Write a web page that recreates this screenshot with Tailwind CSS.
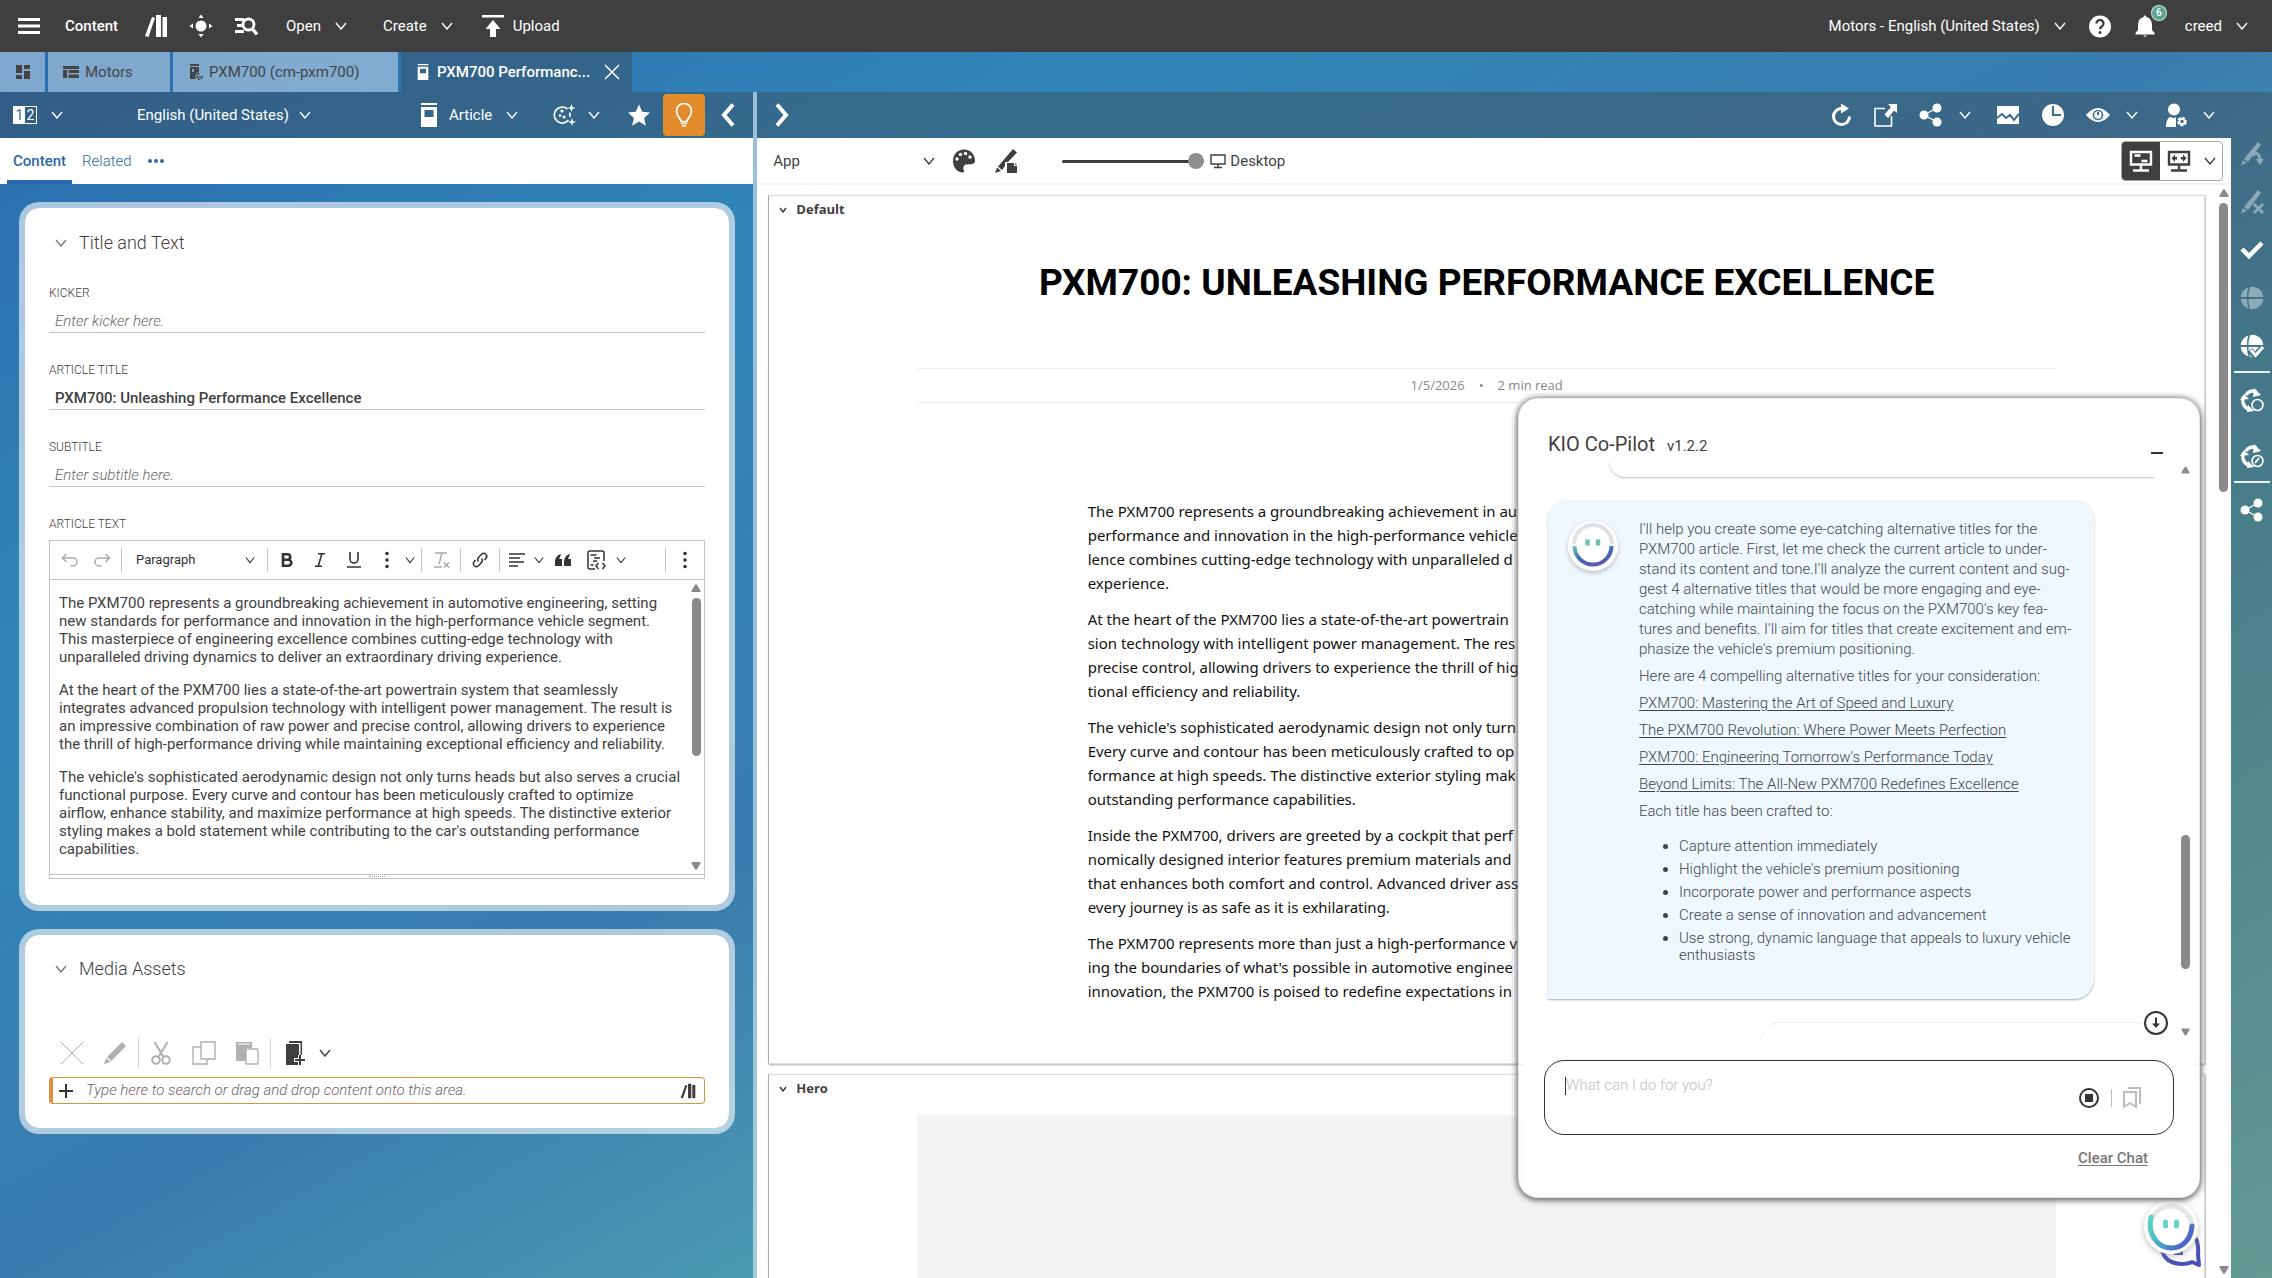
<!DOCTYPE html>
<html lang="en">
  <head>
    <meta charset="UTF-8" />
    <meta name="viewport" content="width=device-width, initial-scale=1.0" />
    <title>PXM700 Performance - Content</title>
    <script src="https://cdn.jsdelivr.net/npm/@tailwindcss/browser@4"></script>
  </head>
  <body
    class="h-screen overflow-hidden flex flex-col font-['Roboto',sans-serif] text-[15px] text-[#3f3f3f] bg-[linear-gradient(to_bottom_right,#2a6aae_0%,#3186b7_27%,#397caf_50%,#4b9bb2_67%,#58acb4_78%,#76cbc2_100%)]"
  >
    <!-- Icon sprite -->
    <svg class="hidden">
      <symbol id="chev" viewBox="0 0 12 8"><path d="M1 1l5 6 5-6" fill="none" stroke="currentColor" stroke-width="1.4" /></symbol>
      <symbol id="books" viewBox="0 0 24 24"><path d="M8 3l3 .8L4.500 23l-3.500-1zM12 1h5v22h-5zM18.500 3H23v20h-4.500z" fill="currentColor" /></symbol>
      <symbol id="article" viewBox="0 0 24 24"><path d="M4 0h16v2H4zM4 4h16v20H4zM7.500 7v7h9V7z" fill="currentColor" fill-rule="evenodd" /></symbol>
      <symbol id="share" viewBox="0 0 24 24"><g fill="currentColor"><circle cx="5" cy="12" r="4.500" /><circle cx="18" cy="5" r="4.500" /><circle cx="18" cy="19" r="4.500" /></g><path d="M18 5L5 12l13 7" fill="none" stroke="currentColor" stroke-width="1.300" /></symbol>
      <symbol id="pencil" viewBox="0 0 24 24"><path d="M19 1l4 4L8.500 20 4 16zM3 17l4.500 4L1 23z" fill="currentColor" /></symbol>
      <symbol id="globe" viewBox="0 0 24 24"><path d="M8.500 1.500C4 3 1 7 .7 11H7c0-4 .5-7 1.500-9.500zM10.500 1C9 4 8.500 7.500 8.500 11h14.800C22.800 5 18 .8 12 .8zM.7 13c.5 4.500 3.500 8 7.800 9.500C7.500 19.500 7 16.500 7 13zM8.500 13c0 4 .7 7.500 2 10.200C17 23.800 22.800 19 23.300 13z" fill="currentColor" /></symbol>
      <symbol id="cycle" viewBox="0 0 24 24">
        <path d="M6 7a8 8 0 0 1 10-3.500M3.500 9a9 9 0 0 0 5 12" fill="none" stroke="currentColor" stroke-width="3.500" />
        <path d="M14 0l7 7-8 2zM0 12l4-6 5 5zM8 17l6 6-7 1z" fill="currentColor" />
        <circle cx="17.500" cy="17" r="5.500" fill="none" stroke="currentColor" stroke-width="1.600" />
      </symbol>
      <symbol id="up" viewBox="0 0 10 8"><path d="M4 .8Q5-.5 6 .8L9.500 6.500Q10 8 8.500 8h-7Q0 8 .5 6.500z" fill="#8a8a8a" /></symbol>
      <symbol id="dots" viewBox="0 0 4 18"><g fill="currentColor"><circle cx="2" cy="2.500" r="1.800" /><circle cx="2" cy="9" r="1.800" /><circle cx="2" cy="15.500" r="1.800" /></g></symbol>
    </svg>

    <!-- Top bar -->
    <header class="h-[52px] shrink-0 flex items-center bg-[#3f3f3f] text-white pl-[17px] pr-6">
      <button aria-label="Menu"><svg class="size-6" viewBox="0 0 24 24" fill="currentColor"><path d="M1 4h22v3H1zM1 10.500h22v3H1zM1 17h22v3H1z" /></svg></button>
      <span class="ml-6 font-medium w-[55px]">Content</span>
      <button class="ml-6" aria-label="Library"><svg class="size-6"><use href="#books" /></svg></button>
      <button class="ml-[21px]" aria-label="Control room"><svg class="size-6" viewBox="0 0 24 24" fill="currentColor"><circle cx="12" cy="12" r="5.500" /><path d="M12 .5L14.500 4h-5zM12 23.500L9.500 20h5zM.5 12L4 9.500v5zM23.500 12L20 14.500v-5z" /></svg></button>
      <button class="ml-[21px]" aria-label="Search"><svg class="size-6" viewBox="0 0 24 24" fill="none" stroke="currentColor" stroke-width="2.800"><path d="M1 5.500h9M3 11.500h6M1 17.500h9" /><circle cx="14.500" cy="10.500" r="5.500" /><path d="M18 14.500l5 6" stroke-width="3.400" /></svg></button>
      <button class="ml-[28px] flex items-center gap-[14px]">Open<svg class="w-3 h-2"><use href="#chev" /></svg></button>
      <button class="ml-9 flex items-center gap-[14px]">Create<svg class="w-3 h-2"><use href="#chev" /></svg></button>
      <button class="ml-7 flex items-center gap-2"><svg class="size-6" viewBox="0 0 24 24" fill="currentColor"><path d="M1 1h22v2.500H1zM12 6l7.500 9H15v8H9v-8H4.500z" /></svg>Upload</button>
      <button class="ml-auto flex items-center gap-[14px]">Motors - English (United States)<svg class="w-3 h-2"><use href="#chev" /></svg></button>
      <button class="ml-[22px]" aria-label="Help"><svg class="size-6" viewBox="0 0 24 24"><circle cx="12" cy="12.500" r="11" fill="#fff" /><path d="M8.500 9.500a3.500 3.500 0 1 1 5.500 2.800c-1.500 1-2 1.500-2 3" fill="none" stroke="#3f3f3f" stroke-width="2.400" /><circle cx="12" cy="18.500" r="1.500" fill="#3f3f3f" /></svg></button>
      <button class="ml-[21px] relative" aria-label="Notifications"><svg class="size-6" viewBox="0 0 24 24" fill="currentColor"><path d="M12 1l1.500 2c4 1 5.500 4.500 5.500 8v5l2.500 3v1.500h-19V19L5 16v-5c0-3.500 1.500-7 5.500-8zM10 21.500h4l-2 1.500z" /></svg><span class="absolute -top-[9px] -right-[10px] size-4 rounded-full bg-[#5ba594] border border-white/70 text-[10px] leading-[14px] font-medium">6</span></button>
      <button class="ml-[28px] flex items-center gap-[14px]">creed<svg class="w-3 h-2"><use href="#chev" /></svg></button>
    </header>

    <!-- Work area tabs -->
    <nav class="h-10 shrink-0 flex gap-[3px] text-[#444]">
      <button class="w-[45px] bg-white/40 flex items-center justify-center" aria-label="Dashboard"><svg class="size-4" viewBox="0 0 16 16" fill="currentColor"><path d="M1 1h6v8H1zM1 11h6v4H1zM9 1h6v4H9zM9 7h6v8H9z" /></svg></button>
      <button class="w-[122px] bg-white/40 flex items-center gap-[6px] pl-[15px]"><svg class="w-4 h-[14px]" viewBox="0 0 16 12" fill="currentColor"><path d="M0 0h16v3H0zM0 4h4v8H0zM5.500 4H16v3H5.500zM5.500 8.500H16V12H5.500z" /></svg>Motors</button>
      <button class="w-[225px] bg-white/40 flex items-center gap-[6px] pl-[16px]"><svg class="w-[14px] h-4" viewBox="0 0 14 16" fill="currentColor"><path d="M1 0h9v2H1zM1 3h9v5l-3 2v5H1zM3 5v3h2V5zM9 9h1.500v7H9zM6 12h8v1.500H6zM7 9.500l1-1 5.500 6-1 1z" fill-rule="evenodd" /></svg>PXM700 (cm-pxm700)</button>
      <div class="w-[231px] bg-[#3f3f3f]/35 flex items-center text-white pl-[14px]">
        <svg class="size-4"><use href="#article" /></svg>
        <button class="ml-[6px] font-medium">PXM700 Performanc...</button>
        <button class="ml-auto mr-3" aria-label="Close tab"><svg class="size-4" viewBox="0 0 16 16" fill="none" stroke="currentColor" stroke-width="1.500"><path d="M1 1l14 14M15 1L1 15" /></svg></button>
      </div>
    </nav>

    <div class="flex-1 min-h-0 flex">
      <!-- Form side -->
      <section class="w-1/3 shrink-0 border-r-4 border-white/50 flex flex-col">
        <div class="h-[46px] bg-[#3f3f3f]/35 text-white flex items-center pl-[13px] pr-[13px]">
          <button class="flex items-center gap-[14px]" aria-label="Compare"><span class="h-[18px] w-6 border border-white flex text-sm leading-4"><span class="w-1/2 bg-white text-[#36688f]">1</span><span class="w-1/2">2</span></span><svg class="w-3 h-2"><use href="#chev" /></svg></button>
          <select class="ml-[74px] appearance-none" aria-label="Language"><option>English (United States)</option></select>
          <svg class="w-3 h-2 ml-[10px]"><use href="#chev" /></svg>
          <button class="ml-auto flex items-center"><svg class="size-6 mr-2"><use href="#article" /></svg>Article<svg class="w-3 h-2 ml-[14px]"><use href="#chev" /></svg></button>
          <button class="ml-[34px] flex items-center gap-3" aria-label="Versions"><svg class="size-6" viewBox="0 0 24 24" fill="none" stroke="currentColor" stroke-width="1.700"><path d="M15.500 6A8 8 0 1 0 16.500 17M17.500 9.500q1 2.500 .3 4.500" /><g fill="currentColor" stroke="none"><circle cx="10" cy="8" r="1.600" /><circle cx="8" cy="12.500" r="1.300" /><circle cx="12" cy="14" r="1.600" /><path d="M19.500 1l1 3 3 1-3 1-1 3-1-3-3-1 3-1zM20 15l1 3 3 1-3 1-1 3-1-3-3-1 3-1z" /></g></svg><svg class="w-3 h-2"><use href="#chev" /></svg></button>
          <button class="ml-[27px]" aria-label="Bookmark"><svg class="size-6" viewBox="0 0 24 24" fill="currentColor"><path d="M12 1.500l3.200 7.300 7.800.8-5.900 5.300 1.800 7.900L12 18.600l-6.900 4.200 1.800-7.900L1 9.600l7.800-.8z" /></svg></button>
          <button class="ml-3 w-[42px] h-[42px] rounded bg-[#e28c2b] flex items-center justify-center" aria-label="Suggestions"><svg class="size-6" viewBox="0 0 24 24" fill="none" stroke="currentColor" stroke-width="1.700"><path d="M9 18.500c0-3-4.500-5-4.500-10.500a7.500 7.500 0 0 1 15 0c0 5.500-4.500 7.500-4.500 10.500zM9 20.500h6M10 23h4" /></svg></button>
          <button class="ml-[11px]" aria-label="Collapse"><svg class="size-6" viewBox="0 0 24 24" fill="none" stroke="currentColor" stroke-width="4"><path d="M17 1.500L8 12l9 10.500" /></svg></button>
        </div>

        <div class="h-[46px] bg-white flex items-center pl-[7px] text-[#2b67a5]">
          <a href="#content" class="h-full px-[6px] flex items-center border-b-4 border-[#2a68ae] pt-1 font-medium">Content</a>
          <a href="#related" class="ml-[10px] font-light">Related</a>
          <button class="ml-4" aria-label="More tabs"><svg class="w-4 h-1" viewBox="0 0 16 4" fill="currentColor"><circle cx="2" cy="2" r="2" /><circle cx="8" cy="2" r="2" /><circle cx="14" cy="2" r="2" /></svg></button>
        </div>

        <div class="pl-[19px] pr-[18px] pt-[18px] flex flex-col gap-[18px]">
          <div class="border-[6px] border-white/60 bg-white bg-clip-padding rounded-[20px] px-6 pt-[21px] pb-[26px]">
            <h2 class="pl-[6px] h-7 flex items-center gap-3 text-lg font-light"><svg class="w-3 h-2 opacity-70"><use href="#chev" /></svg>Title and Text</h2>
            <div class="mt-7 flex flex-col gap-[29px]">
              <div class="flex flex-col">
                <label for="kicker" class="text-xs leading-4 font-light">KICKER</label>
                <input id="kicker" class="mt-2 h-6 px-[6px] border-b border-[#c4c4c4] outline-none placeholder:italic placeholder:font-light placeholder:text-[#666]" placeholder="Enter kicker here." />
              </div>
              <div class="flex flex-col">
                <label for="title" class="text-xs leading-4 font-light">ARTICLE TITLE</label>
                <input id="title" class="mt-2 h-6 px-[6px] border-b border-[#c4c4c4] outline-none font-medium" value="PXM700: Unleashing Performance Excellence" />
              </div>
              <div class="flex flex-col">
                <label for="subtitle" class="text-xs leading-4 font-light">SUBTITLE</label>
                <input id="subtitle" class="mt-2 h-6 px-[6px] border-b border-[#c4c4c4] outline-none placeholder:italic placeholder:font-light placeholder:text-[#666]" placeholder="Enter subtitle here." />
              </div>
              <div>
                <div id="text-label" class="text-xs leading-4 font-light">ARTICLE TEXT</div>
                <div class="mt-2 border border-[#c4c4c4]">
                  <div class="h-[39px] border-b border-[#c4c4c4] pl-1 flex items-center text-[#333] [&>button]:flex [&>button]:items-center [&>button]:justify-center">
                    <button class="w-8 text-[#aaa]" aria-label="Undo"><svg class="size-[18px]" viewBox="0 0 18 18" fill="none" stroke="currentColor" stroke-width="1.500"><path d="M5.500 3L1.500 7l4 4M1.500 7H12a4 4 0 0 1 0 8H9.500" /></svg></button>
                    <button class="w-8 text-[#aaa]" aria-label="Redo"><svg class="size-[18px]" viewBox="0 0 18 18" fill="none" stroke="currentColor" stroke-width="1.500"><path d="M12.500 3l4 4-4 4M16.500 7H6a4 4 0 0 0 0 8h2.500" /></svg></button>
                    <span class="ml-[3px] w-px h-6 bg-[#c4c4c4]"></span>
                    <select class="ml-[14px] w-[108px] appearance-none text-[13px]" aria-label="Heading"><option>Paragraph</option></select>
                    <svg class="ml-px w-[10px] h-2"><use href="#chev" /></svg>
                    <span class="ml-3 mr-[3px] w-px h-6 bg-[#c4c4c4]"></span>
                    <button class="w-8" aria-label="Bold"><svg class="size-4" viewBox="0 0 16 16" fill="none" stroke="currentColor" stroke-width="2.600"><path d="M4 2.300h4.500a2.700 2.700 0 0 1 0 5.400H4zM4 7.700h5.300a3 3 0 0 1 0 6H4zM4 1v14" /></svg></button>
                    <button class="w-[34px]" aria-label="Italic"><svg class="size-4" viewBox="0 0 16 16" fill="none" stroke="currentColor" stroke-width="1.600"><path d="M6 1.800h7M3 14.200h7M9.800 2L6.300 14" /></svg></button>
                    <button class="w-[34px]" aria-label="Underline"><svg class="size-4" viewBox="0 0 16 16" fill="none" stroke="currentColor" stroke-width="1.600"><path d="M4 0v7a4 4 0 0 0 8 0V0M1 15h14" /></svg></button>
                    <button class="ml-1 w-6" aria-label="More styles"><svg class="w-1 h-[18px]"><use href="#dots" /></svg></button>
                    <svg class="ml-[6px] w-[10px] h-2"><use href="#chev" /></svg>
                    <span class="ml-[6px] w-px h-6 bg-[#c4c4c4]"></span>
                    <button class="w-[38px] text-[#aaa]" aria-label="Remove format"><svg class="size-[18px]" viewBox="0 0 18 18" fill="none" stroke="currentColor" stroke-width="1.500"><path d="M3 2h12M10 2L7 13M2 16h8M12 11.500l5 5M17 11.500l-5 5" /></svg></button>
                    <span class="w-px h-6 bg-[#c4c4c4]"></span>
                    <button class="w-[38px]" aria-label="Link"><svg class="size-4" viewBox="0 0 16 16" fill="none" stroke="currentColor" stroke-width="1.500"><path d="M6.500 9.500a3 3 0 0 1 0-4l3-3.200a3 3 0 0 1 4.300 4.200L12.500 8M9.500 6.500a3 3 0 0 1 0 4l-3 3.200a3 3 0 0 1-4.300-4.200L3.500 8" /></svg></button>
                    <span class="w-px h-6 bg-[#c4c4c4]"></span>
                    <button class="w-[34px]" aria-label="Align"><svg class="size-4" viewBox="0 0 16 16" fill="none" stroke="currentColor" stroke-width="1.400"><path d="M0 2h16M0 6h11M0 10h15M0 14h9" /></svg></button>
                    <svg class="w-[10px] h-2"><use href="#chev" /></svg>
                    <button class="ml-[2px] w-[34px]" aria-label="Quote"><svg class="w-4 h-3" viewBox="0 0 16 12" fill="currentColor"><path d="M0 8c0-4 2-7 6-8L5 3 4 5h3v7H0zM9 8c0-4 2-7 6-8l-1 3-1 2h3v7H9z" /></svg></button>
                    <button class="w-8" aria-label="Source"><svg class="size-5" viewBox="0 0 20 20" fill="none" stroke="currentColor" stroke-width="1.500"><path d="M9 19H4q-2 0-2-2V3q0-2 2-2h12q2 0 2 2v8M4.500 5h6M8 8h6M7 11h4M4.500 15h3M12.500 13l-2.500 3 2.500 3M16.500 13l2.500 3-2.500 3" /></svg></button>
                    <svg class="ml-1 w-[10px] h-2"><use href="#chev" /></svg>
                    <span class="ml-auto w-px h-6 bg-[#c4c4c4]"></span>
                    <button class="w-[38px]" aria-label="More"><svg class="w-1 h-[18px]"><use href="#dots" /></svg></button>
                  </div>
                  <div class="flex h-[294px]">
                    <div contenteditable="true" role="textbox" aria-labelledby="text-label" class="flex-1 min-w-0 pl-[9px] pr-2 pt-[14px] overflow-hidden outline-none flex flex-col gap-[15px] leading-[18px]">
                      <p>The PXM700 represents a groundbreaking achievement in automotive engineering, setting new standards for performance and innovation in the high-performance vehicle segment. This masterpiece of engineering excellence combines cutting-edge technology with unparalleled driving dynamics to deliver an extraordinary driving experience.</p>
                      <p>At the heart of the PXM700 lies a state-of-the-art powertrain system that seamlessly integrates advanced propulsion technology with intelligent power management. The result is an impressive combination of raw power and precise control, allowing drivers to experience the thrill of high-performance driving while maintaining exceptional efficiency and reliability.</p>
                      <p>The vehicle's sophisticated aerodynamic design not only turns heads but also serves a crucial functional purpose. Every curve and contour has been meticulously crafted to optimize airflow, enhance stability, and maximize performance at high speeds. The distinctive exterior styling makes a bold statement while contributing to the car's outstanding performance capabilities.</p>
                    </div>
                    <div class="w-4 py-1 flex flex-col items-center">
                      <svg class="w-[10px] h-2"><use href="#up" /></svg>
                      <span class="mt-[6px] w-[9px] h-[158px] rounded-full bg-[#8a8a8a]"></span>
                      <svg class="mt-auto w-[10px] h-2 rotate-180"><use href="#up" /></svg>
                    </div>
                  </div>
                  <div class="h-1 border-t border-[#c4c4c4] flex justify-center"><span class="w-4 h-[3px] -mt-px bg-white border-y border-dotted border-[#aaa]"></span></div>
                </div>
              </div>
            </div>
          </div>

          <div class="border-[6px] border-white/60 bg-white bg-clip-padding rounded-[20px] px-6 pt-5 pb-6">
            <h2 class="pl-[6px] h-7 flex items-center gap-3 text-lg font-light"><svg class="w-3 h-2 opacity-70"><use href="#chev" /></svg>Media Assets</h2>
            <div class="mt-[55px] h-[30px] pl-[11px] flex items-center text-[#b0b0b0]">
              <button aria-label="Remove"><svg class="size-6" viewBox="0 0 24 24" fill="none" stroke="currentColor"><path d="M1 1l22 22M23 1L1 23" /></svg></button>
              <button class="ml-[19px]" aria-label="Edit"><svg class="size-6"><use href="#pencil" /></svg></button>
              <span class="ml-[11px] w-px h-[30px] bg-[#d5d5d5]"></span>
              <button class="ml-[10px]" aria-label="Cut"><svg class="size-6" viewBox="0 0 24 24" fill="none" stroke="currentColor" stroke-width="2"><path d="M5.500 1l9 15M18.500 1l-9 15" /><circle cx="7" cy="19" r="3.800" /><circle cx="17" cy="19" r="3.800" /></svg></button>
              <button class="ml-[19px]" aria-label="Copy"><svg class="size-6" viewBox="0 0 24 24" fill="none" stroke="currentColor" stroke-width="1.400"><path d="M15 18H9V1h14v17h-8zM9 6H1v17h14v-5" /></svg></button>
              <button class="ml-[19px]" aria-label="Paste"><svg class="size-6" viewBox="0 0 24 24"><path d="M1 2q0-1 1-1h14q1 0 1 1v5h-6v13H2q-1 0-1-1z" fill="currentColor" /><path d="M3 3h12" stroke="#fff" /><rect x="11" y="8" width="12" height="15" rx="1" fill="#fff" stroke="currentColor" stroke-width="1.400" /></svg></button>
              <span class="ml-[11px] w-px h-[30px] bg-[#d5d5d5]"></span>
              <button class="ml-3 text-[#3f3f3f]" aria-label="Add content"><svg class="size-6" viewBox="0 0 24 24" fill="currentColor"><path d="M6 0h13v14h-1.500V2H6zM3 3h13v11h-1v3h-4v4h4v3H3zM16 14h2v4h4v2h-4v4h-2v-4h-4v-2h4z" /></svg></button>
              <svg class="ml-3 w-3 h-2 text-[#3f3f3f]"><use href="#chev" /></svg>
            </div>
            <div class="mt-[9px] h-[27px] border border-l-4 border-[#d9913a] rounded flex items-center pl-[6px] pr-2">
              <svg class="size-[14px]" viewBox="0 0 14 14"><path d="M7 0v14M0 7h14" stroke="#333" stroke-width="2" /></svg>
              <input class="ml-[13px] flex-1 outline-none placeholder:italic placeholder:font-light placeholder:text-[#666]" aria-label="Add media" placeholder="Type here to search or drag and drop content onto this area." />
              <button aria-label="Open library"><svg class="size-4"><use href="#books" /></svg></button>
            </div>
          </div>
        </div>
      </section>

      <!-- Preview side -->
      <section class="flex-1 min-w-0 flex flex-col">
        <div class="h-[46px] shrink-0 bg-[#3f3f3f]/35 text-white flex items-center pl-3 pr-[57px]">
          <button aria-label="Expand"><svg class="size-6" viewBox="0 0 24 24" fill="none" stroke="currentColor" stroke-width="4"><path d="M8 1.500L17 12 8 22.500" /></svg></button>
          <button class="ml-auto" aria-label="Reload"><svg class="size-6" viewBox="0 0 24 24" fill="none" stroke="currentColor" stroke-width="3"><path d="M13 5.500a8 8 0 1 0 7.500 8" /><path d="M12 .5l8 5-8 5z" fill="currentColor" stroke="none" /></svg></button>
          <button class="ml-[21px]" aria-label="Open in new tab"><svg class="size-6" viewBox="0 0 24 24"><path d="M11 5.500H1V23h16.500V13" fill="none" stroke="currentColor" stroke-width="1.600" /><path d="M14 1h9v9l-3-2.500-6 7.500-3.500-3.500L17 4z" fill="currentColor" /></svg></button>
          <button class="ml-[21px] flex items-center gap-4" aria-label="Share"><svg class="size-6"><use href="#share" /></svg><svg class="w-3 h-2"><use href="#chev" /></svg></button>
          <button class="ml-[25px]" aria-label="Analytics"><svg class="size-6" viewBox="0 0 24 24"><path d="M1 3h22v18H1z" fill="currentColor" /><path d="M1 15l5-4 4 4 4-3 4 5 5-6" fill="none" stroke="#386d92" stroke-width="2" /></svg></button>
          <button class="ml-[21px]" aria-label="Time travel"><svg class="size-6" viewBox="0 0 24 24"><circle cx="12" cy="12" r="11" fill="currentColor" /><path d="M12 3v9h8" fill="none" stroke="#386d92" stroke-width="2" /></svg></button>
          <button class="ml-[21px] flex items-center gap-4" aria-label="View"><svg class="size-6" viewBox="0 0 24 24"><path d="M0 12Q6 5 12 5t12 7q-6 7-12 7T0 12z" fill="currentColor" /><circle cx="12" cy="12" r="4.500" fill="currentColor" stroke="#386d92" stroke-width="1.600" /><path d="M12 9v3" stroke="#386d92" stroke-width="2" /></svg><svg class="w-3 h-2"><use href="#chev" /></svg></button>
          <button class="ml-[26px] flex items-center gap-[15px]" aria-label="Persona"><svg class="size-6" viewBox="0 0 24 24" fill="currentColor"><circle cx="10" cy="6.500" r="6" /><path d="M2 24c0-6 2-10 5-10 2 1.500 3 1.500 5 0v10z" /><circle cx="18" cy="18.500" r="3.500" fill="none" stroke="currentColor" stroke-width="2.500" stroke-dasharray="3 1" /><circle cx="18" cy="18.500" r="2.500" fill="none" stroke="currentColor" stroke-width="1.500" /></svg><svg class="w-3 h-2"><use href="#chev" /></svg></button>
        </div>

        <div class="flex-1 min-h-0 flex">
          <div class="flex-1 min-w-0 bg-white flex flex-col">
            <div class="h-[47px] shrink-0 border-b-2 border-[#f3f3f3] flex items-center pl-4 pr-2 pt-px">
              <select class="w-[150px] appearance-none" aria-label="Preview rendering"><option>App</option></select>
              <svg class="w-3 h-2"><use href="#chev" /></svg>
              <button class="ml-[17px]" aria-label="Theme"><svg class="size-6" viewBox="0 0 24 24"><path d="M12 .5C5 .5 1 6 1 12c0 6 4 11.500 9.500 11.500 1.800 0 2-1 1.300-2.500-1-2 0-5 2-5.500 3-.5 9.200 1 9.200-4C23 5 18 .5 12 .5z" fill="currentColor" /><g fill="#fff"><circle cx="5" cy="10" r="1.700" /><circle cx="8.500" cy="5.500" r="1.700" /><circle cx="13.500" cy="4.500" r="1.700" /><circle cx="18" cy="8" r="1.700" /></g></svg></button>
              <button class="ml-[18px]" aria-label="Edit theme"><svg class="size-6" viewBox="0 0 24 24" fill="currentColor"><path d="M19 0l4 3.500L14 13h-3v4l-3 4-4-3.500zM3 18.500l4 3.500-6 2zM13 14h7v3h3v7H13zM21 14l2 2h-2z" /></svg></button>
              <input type="range" value="100" aria-label="Device size" class="ml-11 w-[142px] appearance-none h-[3px] bg-[#3f3f3f] rounded-full [&::-webkit-slider-thumb]:appearance-none [&::-webkit-slider-thumb]:size-4 [&::-webkit-slider-thumb]:rounded-full [&::-webkit-slider-thumb]:bg-[#8f8f8f]" />
              <svg class="ml-[6px] size-4" viewBox="0 0 16 16" fill="none" stroke="currentColor" stroke-width="1.400"><path d="M1 2h14v9H1zM8 11v3M4 14.500h8" /></svg>
              <span class="ml-1">Desktop</span>
              <div class="ml-auto h-10 border border-[#aaa] rounded flex items-center overflow-hidden">
                <button class="h-full w-[38px] bg-[#3f3f3f] text-white flex items-center justify-center" aria-label="Fragment view"><svg class="size-6" viewBox="0 0 24 24" fill="none" stroke="currentColor" stroke-width="2.400"><path d="M2 3h20v12.500H2zM12 15.500V21M4 21.500h16" /><path d="M5.500 6.500h6M12.500 12h6" /></svg></button>
                <button class="w-[38px] flex items-center justify-center" aria-label="Split view"><svg class="size-6" viewBox="0 0 24 24" fill="none" stroke="currentColor" stroke-width="2.400"><path d="M2 3h20v12.500H2zM12 15.500V21M4 21.500h16" /><path d="M4.500 9.200L8 5.500V8h2v2.500H8V13zM19.500 9.200L16 5.500V8h-2v2.500h2V13z" fill="currentColor" stroke="none" /></svg></button>
                <svg class="ml-[6px] mr-[6px] w-3 h-2"><use href="#chev" /></svg>
              </div>
            </div>

            <div class="flex-1 min-h-0 flex">
              <div class="flex-1 min-w-0 pl-[11px] pr-px pt-[10px] flex flex-col gap-[10px] overflow-hidden">
                <article class="h-[869px] shrink-0 border border-[#ddd] border-l-[#aaa] shadow-[1px_1px_2px_#aaa] pt-[3px] overflow-hidden">
                  <h3 class="pl-[10px] h-[22px] flex items-center gap-[9px] font-['Open_Sans',sans-serif] text-[13px] font-bold"><svg class="w-2 h-[6px]" viewBox="0 0 8 6"><path d="M1 1l3 4 3-4" fill="none" stroke="currentColor" stroke-width="1.500" /></svg>Default</h3>
                  <h1 class="mt-6 h-[76px] leading-[76px] text-center text-black font-bold text-[37px] whitespace-nowrap">PXM700: UNLEASHING PERFORMANCE EXCELLENCE</h1>
                  <div class="mx-[148px] mt-[47px] h-[35px] border-y border-[#eee] flex items-center justify-center gap-[14px] font-['Open_Sans',sans-serif] text-[13px] text-[#888]"><span>1/5/2026</span><span>•</span><span>2 min read</span></div>
                  <div class="mt-24 mx-auto max-w-[798px] text-[15px] leading-6 text-[#111] font-['Noto_Sans',sans-serif] flex flex-col gap-3 whitespace-nowrap">
                    <p>The PXM700 represents a groundbreaking achievement in au<br />performance and innovation in the high-performance vehicle<br />lence combines cutting-edge technology with unparalleled d<br />experience.</p>
                    <p>At the heart of the PXM700 lies a state-of-the-art powertrain<br />sion technology with intelligent power management. The res<br />precise control, allowing drivers to experience the thrill of hig<br />tional efficiency and reliability.</p>
                    <p>The vehicle's sophisticated aerodynamic design not only turn<br />Every curve and contour has been meticulously crafted to op<br />formance at high speeds. The distinctive exterior styling mak<br />outstanding performance capabilities.</p>
                    <p>Inside the PXM700, drivers are greeted by a cockpit that perf<br />nomically designed interior features premium materials and<br />that enhances both comfort and control. Advanced driver ass<br />every journey is as safe as it is exhilarating.</p>
                    <p>The PXM700 represents more than just a high-performance v<br />ing the boundaries of what's possible in automotive enginee<br />innovation, the PXM700 is poised to redefine expectations in</p>
                  </div>
                </article>
                <article class="flex-1 min-h-0 border border-b-0 border-[#ddd] border-l-[#aaa] shadow-[1px_1px_2px_#aaa] pt-[3px] flex flex-col">
                  <h3 class="pl-[10px] h-[22px] flex items-center gap-[9px] font-['Open_Sans',sans-serif] text-[13px] font-bold"><svg class="w-2 h-[6px]" viewBox="0 0 8 6"><path d="M1 1l3 4 3-4" fill="none" stroke="currentColor" stroke-width="1.500" /></svg>Hero</h3>
                  <div class="mt-[15px] mx-[148px] flex-1 bg-[#f3f3f3]"></div>
                </article>
              </div>
              <div class="ml-[10px] w-[15px] py-1 flex flex-col items-center">
                <svg class="w-[10px] h-2"><use href="#up" /></svg>
                <span class="mt-[6px] w-[9px] h-[289px] rounded-full bg-[#8a8a8a]"></span>
                <svg class="mt-auto w-[10px] h-2 rotate-180"><use href="#up" /></svg>
              </div>
            </div>
          </div>

          <!-- Workflow actions -->
          <aside class="w-[41px] shrink-0 bg-[#3f3f3f]/35 text-white">
            <div class="-mt-2 flex flex-col items-center [&>button]:h-12 [&>button]:flex [&>button]:items-center">
              <button class="opacity-40" aria-label="Check in"><svg class="size-6" viewBox="0 0 24 24"><path d="M18 0l3 3L8 20l-4-3zM3 18l4 3-6 2z" fill="currentColor" /><path d="M12 14c4-5 8-2 8 4" fill="none" stroke="currentColor" stroke-width="3" /><path d="M15.500 17H24l-4 6z" fill="currentColor" /></svg></button>
              <button class="opacity-40" aria-label="Revert"><svg class="size-6" viewBox="0 0 24 24"><path d="M18 0l3 3L8 20l-4-3zM3 18l4 3-6 2z" fill="currentColor" /><path d="M14 14l9 9M23 14l-9 9" stroke="currentColor" stroke-width="3" /></svg></button>
              <button aria-label="Approve"><svg class="size-6" viewBox="0 0 24 24" fill="none" stroke="currentColor" stroke-width="4.500"><path d="M2 11l7 7L22 5" /></svg></button>
              <button class="opacity-40" aria-label="Publish"><svg class="size-6"><use href="#globe" /></svg></button>
              <button aria-label="Approve and publish"><svg class="size-6" viewBox="0 0 24 24"><use href="#globe" /><path d="M10 16l5 6 8-9" fill="none" stroke="#427793" stroke-width="6" /><path d="M11 16l4.500 5.500L23 13" fill="none" stroke="currentColor" stroke-width="3" /></svg></button>
              <span class="mt-px mb-[3px] h-[2px] w-9 bg-white/90"></span>
              <button aria-label="Start workflow"><svg class="size-6"><use href="#cycle" /></svg></button>
              <button class="mt-2" aria-label="Workflow time"><svg class="size-6" viewBox="0 0 24 24"><use href="#cycle" /><path d="M15 19l4-5" stroke="currentColor" stroke-width="2" /></svg></button>
              <span class="mt-px mb-[3px] h-[2px] w-9 bg-white/90"></span>
              <button aria-label="Share"><svg class="size-6"><use href="#share" /></svg></button>
            </div>
          </aside>
        </div>
      </section>
    </div>

    <!-- Assistant launcher -->
    <button class="absolute right-[72px] bottom-[2px] w-[56px] h-[76px]" aria-label="Toggle assistant">
      <svg class="size-full overflow-visible" viewBox="0 0 56 76">
        <path d="M18 50q3 13 19 14 7 0 11-2l7 3-1-10q1-8-2-17" fill="#fff" stroke="#4a52b8" stroke-width="4" stroke-linejoin="round" />
        <path d="M30 53h9" fill="none" stroke="#4a52b8" stroke-width="4" />
      </svg>
      <span class="absolute top-0 left-0 size-[54px] rounded-full bg-white shadow-[0_2px_6px_#8888]">
        <svg class="size-full" viewBox="0 0 54 54" fill="none">
          <defs><linearGradient id="smile" x1="0" x2="1" y1="0" y2=".6"><stop stop-color="#62d4c8" /><stop offset=".4" stop-color="#4bbcc6" /><stop offset="1" stop-color="#4a5fc8" /></linearGradient></defs>
          <circle cx="27" cy="27" r="21" stroke="#e6e6e6" stroke-width="5" />
          <path d="M7 17c-4 17 7 31 20 31 12 0 20-9 21-22" stroke="url(#smile)" stroke-width="5" stroke-linecap="round" />
          <path d="M21.500 22v4M32.500 22v4" stroke="#62d4c8" stroke-width="5" stroke-linecap="round" />
        </svg>
      </span>
    </button>

    <!-- Assistant window -->
    <div role="dialog" aria-label="KIO Co-Pilot" class="absolute top-[398px] right-[72px] w-[682px] h-[800px] rounded-[20px] border-[6px] border-white/80 bg-white bg-clip-padding shadow-[0_1px_6px_1px_#555] flex flex-col overflow-hidden">
      <div class="h-[57px] shrink-0 pl-6 pr-[31px] pt-[26px] flex items-baseline">
        <h2 class="text-xl leading-7">KIO Co-Pilot</h2>
        <span class="ml-3">v1.2.2</span>
        <button class="ml-auto self-end mb-[7px]" aria-label="Minimize"><svg class="w-3 h-[2px]" viewBox="0 0 12 2"><path d="M0 0h12v2H0z" fill="#333" /></svg></button>
      </div>
      <div class="h-[579px] shrink-0 flex">
        <div class="flex-1 min-w-0 pl-6 pb-0 overflow-hidden">
          <div class="w-9/10 h-4 ml-auto rounded-bl-[20px] shadow-[0_1px_2px_#bbb]"></div>
          <div class="mt-[23px] w-9/10 min-h-[499px] bg-[#f0f8ff] rounded-[20px] rounded-bl-none shadow-[0_1px_2px_#aaa] flex gap-[21px] pl-5 pt-[19px] text-[#3d4650] font-light">
            <svg class="mt-[2px] size-[50px] shrink-0 rounded-full shadow-[0_2px_4px_#9999] bg-white" viewBox="0 0 50 50" fill="none">
              <defs><linearGradient id="smile2" x1="0" x2=".7" y1="0" y2="1"><stop stop-color="#6fc5b0" /><stop offset=".55" stop-color="#3a6db4" /><stop offset="1" stop-color="#6258b0" /></linearGradient></defs>
              <path d="M6 23a19 19 0 0 1 38 0" stroke="#e2e2e2" stroke-width="4" />
              <path d="M6.500 25a18.500 18.500 0 0 0 37 0" stroke="url(#smile2)" stroke-width="4" />
              <path d="M19.500 18.500v6M30 18.500v6" stroke="#6fc0b0" stroke-width="4.500" />
            </svg>
            <div class="flex flex-col gap-[7px] items-start leading-5 whitespace-nowrap">
              <p>I'll help you create some eye-catching alternative titles for the<br />PXM700 article. First, let me check the current article to under-<br />stand its content and tone.I'll analyze the current content and sug-<br />gest 4 alternative titles that would be more engaging and eye-<br />catching while maintaining the focus on the PXM700's key fea-<br />tures and benefits. I'll aim for titles that create excitement and em-<br />phasize the vehicle's premium positioning.</p>
              <p>Here are 4 compelling alternative titles for your consideration:</p>
              <a href="#title-1" class="underline underline-offset-2">PXM700: Mastering the Art of Speed and Luxury</a>
              <a href="#title-2" class="underline underline-offset-2">The PXM700 Revolution: Where Power Meets Perfection</a>
              <a href="#title-3" class="underline underline-offset-2">PXM700: Engineering Tomorrow's Performance Today</a>
              <a href="#title-4" class="underline underline-offset-2">Beyond Limits: The All-New PXM700 Redefines Excellence</a>
              <p>Each title has been crafted to:</p>
              <ul class="mt-[10px] list-disc pl-10 leading-[17px] flex flex-col gap-[6px]">
                <li>Capture attention immediately</li>
                <li>Highlight the vehicle's premium positioning</li>
                <li>Incorporate power and performance aspects</li>
                <li>Create a sense of innovation and advancement</li>
                <li>Use strong, dynamic language that appeals to luxury vehicle<br />enthusiasts</li>
              </ul>
            </div>
          </div>
          <div class="mt-[23px] ml-auto w-[65%] h-10 rounded-tl-[20px] rounded-tr-[20px] border border-[#eee]"></div>
        </div>
        <div class="ml-[26px] w-[9px] mr-1 pt-[5px] pb-1 flex flex-col items-center">
          <svg class="w-[9px] h-2"><use href="#up" /></svg>
          <span class="mt-[361px] w-[9px] h-[134px] rounded-full bg-[#8a8a8a]"></span>
          <svg class="mt-auto w-[9px] h-2 rotate-180"><use href="#up" /></svg>
        </div>
      </div>
      <button class="absolute right-[26px] bottom-[157px] size-6" aria-label="Scroll down"><svg class="size-full" viewBox="0 0 24 24" fill="none" stroke="#333" stroke-width="2"><circle cx="12" cy="12" r="11" fill="#fff" /><path d="M12 6.500V15" /><path d="M8 12.500h8l-4 4.500z" fill="#333" stroke="none" /></svg></button>
      <form class="mt-5 ml-5 mr-5 h-[75px] border border-[#333] rounded-[20px] flex items-center pl-5 pr-[31px]">
        <span class="self-start mt-4 h-[18px] w-px bg-[#333]"></span>
        <textarea class="self-start mt-[14px] h-12 flex-1 resize-none outline-none leading-5 placeholder:font-light placeholder:text-[#c0c0c0]" aria-label="Message" placeholder="What can I do for you?"></textarea>
        <button type="button" aria-label="Stop"><svg class="size-5" viewBox="0 0 20 20"><circle cx="10" cy="10" r="9" fill="none" stroke="#333" stroke-width="2" /><path d="M6 6h8v8H6z" fill="#333" /></svg></button>
        <span class="ml-3 w-px h-[18px] bg-[#bbb]"></span>
        <button type="button" class="ml-[10px]" aria-label="Saved prompts"><svg class="w-[20px] h-[22px]" viewBox="0 0 20 22" fill="none" stroke="#bdbdbd" stroke-width="2"><path d="M2 5h12v15l-6-4-6 4zM6 1h12v16" /></svg></button>
      </form>
      <a href="#clear" class="mt-3 mr-[46px] self-end font-medium text-[#777] underline underline-offset-2">Clear Chat</a>
    </div>
  </body>
</html>
